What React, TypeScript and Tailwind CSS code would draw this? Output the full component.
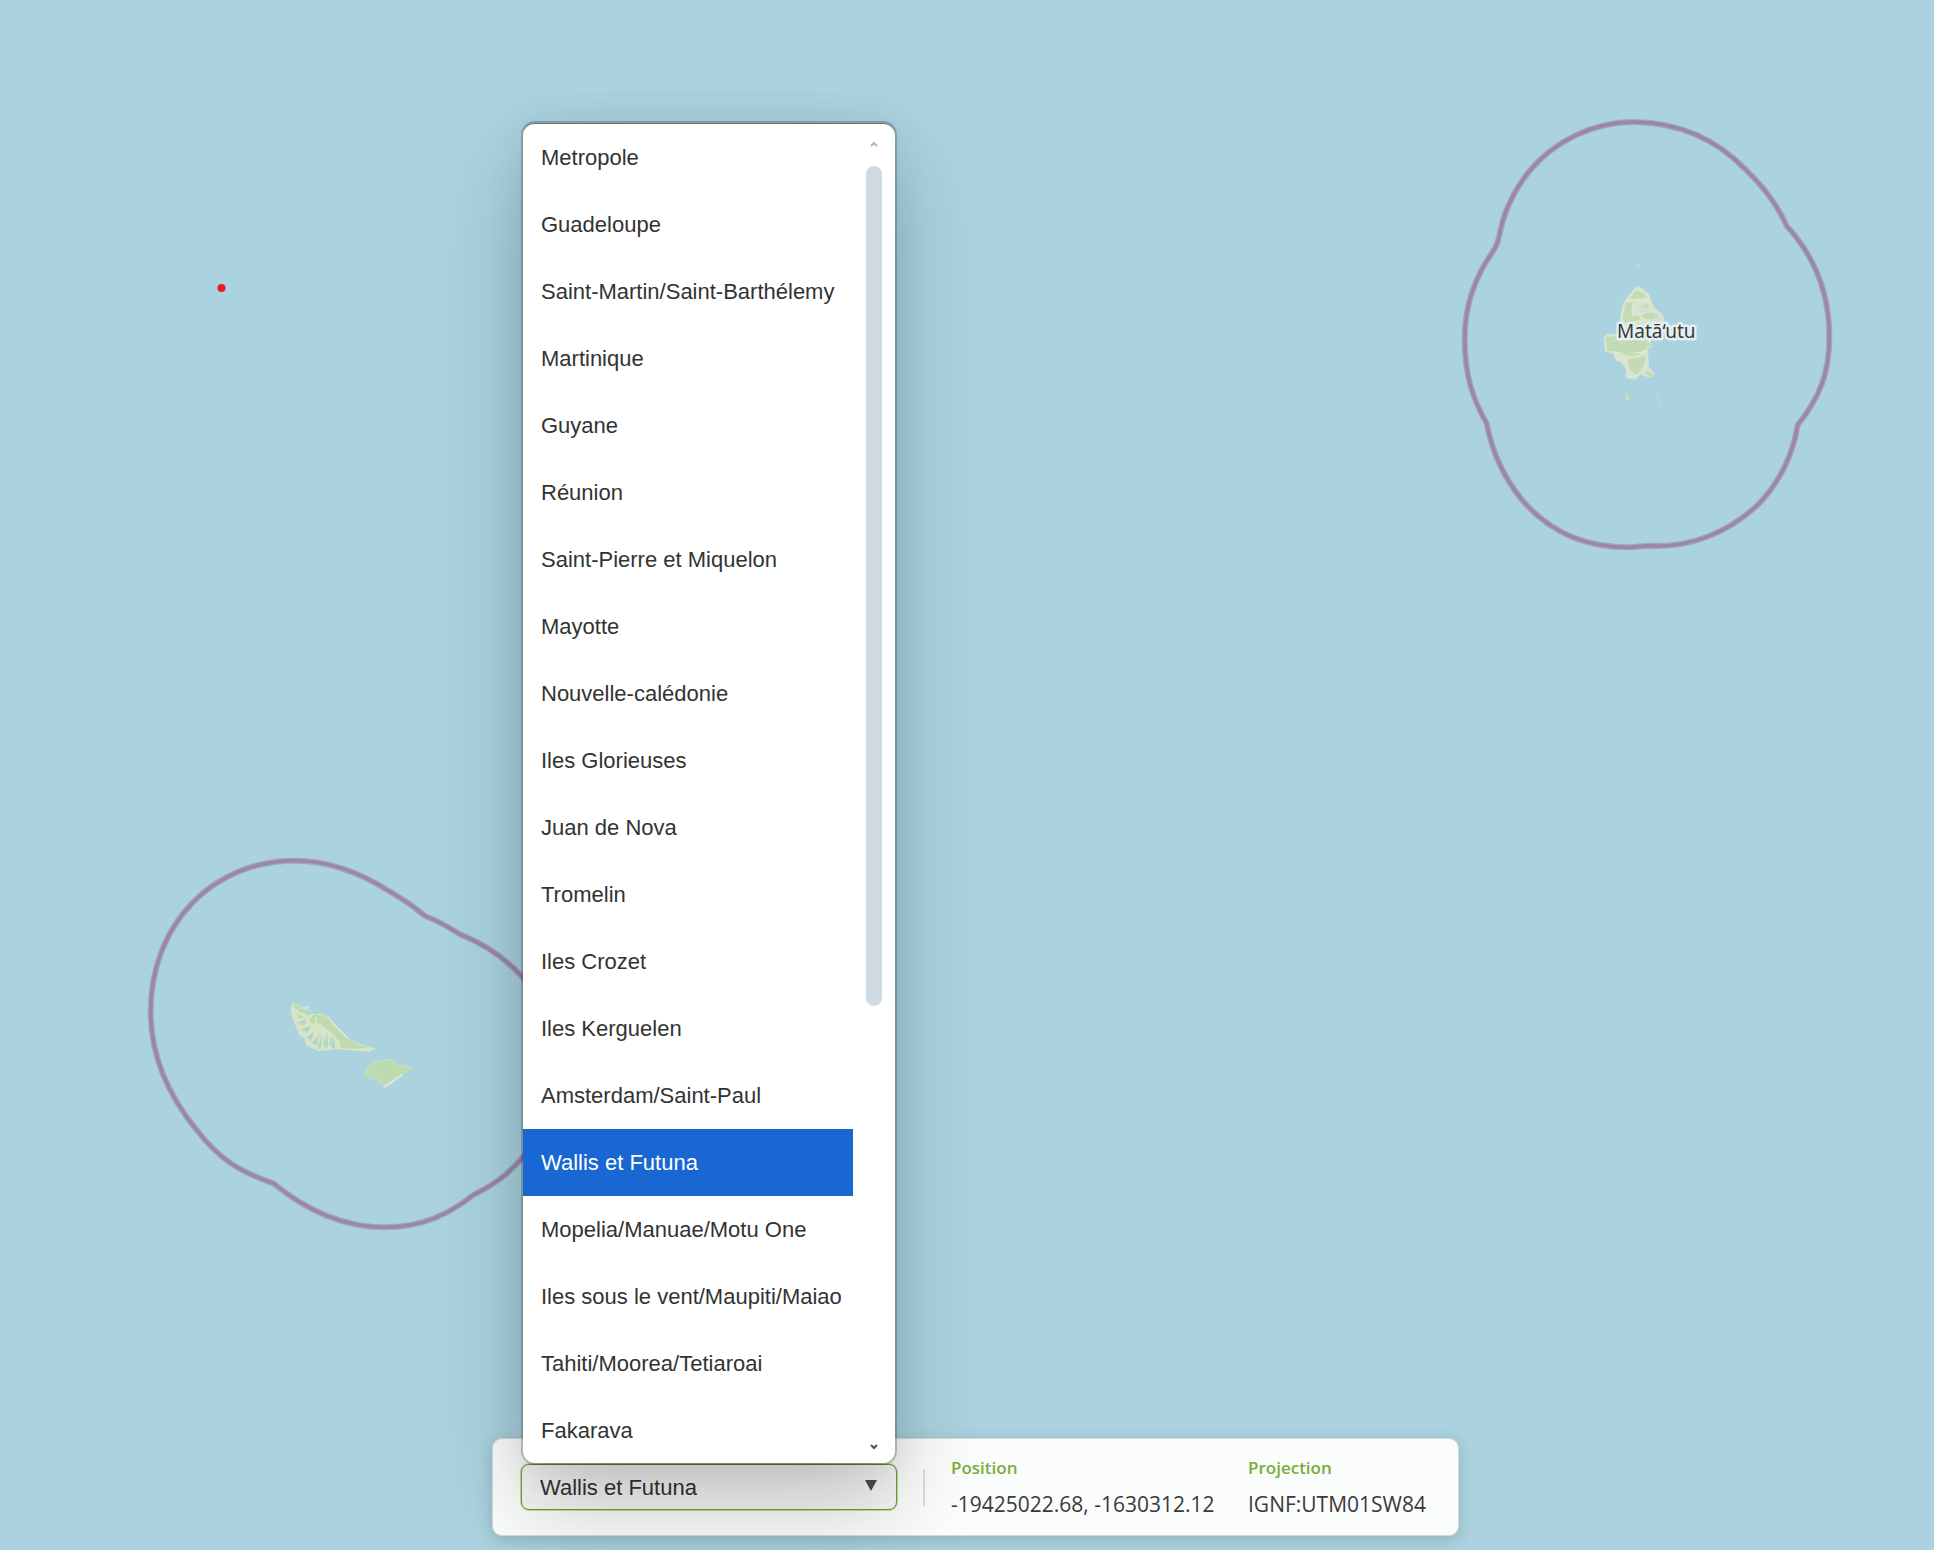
import { useState } from "react";

const TERRITORIES = [
  "Metropole",
  "Guadeloupe",
  "Saint-Martin/Saint-Barthélemy",
  "Martinique",
  "Guyane",
  "Réunion",
  "Saint-Pierre et Miquelon",
  "Mayotte",
  "Nouvelle-calédonie",
  "Iles Glorieuses",
  "Juan de Nova",
  "Tromelin",
  "Iles Crozet",
  "Iles Kerguelen",
  "Amsterdam/Saint-Paul",
  "Wallis et Futuna",
  "Mopelia/Manuae/Motu One",
  "Iles sous le vent/Maupiti/Maiao",
  "Tahiti/Moorea/Tetiaroai",
  "Fakarava",
];

const WALLIS_BORDER =
  "M585 66C460 64 340 125 265 217C220 275 190 335 177 410C174 428 166 444 155 460C100 540 74 620 74 715C74 830 100 900 140 970C155 1050 190 1130 245 1198C330 1300 440 1342 565 1342C590 1342 600 1338 625 1337C745 1345 865 1300 958 1210C1020 1145 1060 1060 1073 975C1140 890 1168 820 1168 710C1168 585 1125 470 1040 378C1010 310 965 255 920 212C825 112 715 68 585 66Z";
const FUTUNA_BORDER =
  "M495 62C250 62 62 250 62 515C62 640 110 760 200 870C270 960 330 995 430 1030C540 1120 650 1162 765 1162C880 1162 960 1120 1030 1065C1110 1025 1140 995 1185 945C1340 760 1320 580 1185 420C1130 355 1070 315 990 283C950 257 925 243 885 228C850 198 820 178 780 155C690 97 590 62 495 62Z";

function MapCanvas() {
  return (
    <svg
      className="absolute inset-0 h-full w-full"
      viewBox="0 0 1934 1550"
      preserveAspectRatio="xMidYMid slice"
      aria-hidden="true"
    >
      <defs>
        <filter id="soften">
          <feGaussianBlur stdDeviation="1.6" />
        </filter>
      </defs>

      <circle cx="221.5" cy="288" r="4" fill="#e91c1c" />

      {/* Maritime limits */}
      <g fill="none" strokeLinejoin="round">
        <g transform="translate(1440 100) scale(0.33333)">
          <path d={WALLIS_BORDER} stroke="#a3a3bd" strokeWidth="18" />
          <path d={WALLIS_BORDER} stroke="#9b86a8" strokeWidth="10" />
        </g>
        <g transform="translate(130 840) scale(0.33333)">
          <path d={FUTUNA_BORDER} stroke="#a3a3bd" strokeWidth="18" />
          <path d={FUTUNA_BORDER} stroke="#9b86a8" strokeWidth="10" />
        </g>
      </g>

      {/* Wallis */}
      <g transform="translate(1590 250) scale(0.33333)" filter="url(#soften)">
        <path d="M136 45l12-2 6 9-7-3z" fill="#cfdfcb" />
        <path
          d="M142 108L160 120L176 132L184 158L196 178L214 190L222 206L220 222L196 238L180 262L184 290L172 296L174 325L176 352L192 370L186 382L166 378L150 372L138 388L108 382L110 358L94 336L78 330L70 310L46 304L42 262L52 254L84 252L90 234L92 196L102 158L120 132Z"
          fill="#dae5cd"
          stroke="#d2e2d6"
          strokeWidth="3"
        />
        <path
          d="M138 122L160 128L170 142L120 148ZM108 158L130 156L122 190L150 200L148 216L110 222L98 206ZM156 196L182 186L208 196L196 204L168 210ZM150 172L172 160L176 174ZM46 262L90 256L120 262L172 268L170 296L150 306L144 316L110 318L92 306L52 302ZM114 328L166 318L162 348L140 374L118 358ZM166 360L190 372L184 380L168 374ZM172 276L184 280L180 292L172 290Z"
          fill="#c1dcb2"
        />
        <path d="M106 150L182 154M128 160L130 200M100 222L176 208M130 310L168 304" stroke="#e1eac9" strokeWidth="4" fill="none" />
        <path d="M148 164L172 178L178 190L150 188ZM182 206L212 200L216 216L190 222Z" fill="#d8dcd4" />
        <path d="M72 280l8-2 2 8-8 2z" fill="#aad3df" />
        <path d="M106 424L120 440L118 451L106 450ZM198 422L206 432L210 462L206 466L204 440Z" fill="#c4dbbd" />
      </g>

      {/* Futuna and Alofi */}
      <g transform="translate(270 980) scale(0.33333)" filter="url(#soften)">
        <path
          d="M68 66L100 82L112 76L124 94L134 104L150 100L176 110L200 140L236 176L268 192L318 206L298 216L236 210L200 208L148 214L124 204L108 194L104 174L88 166L78 140L66 112L62 90Z"
          fill="#d6e4c8"
        />
        <path
          d="M70 70L102 86L120 98L112 108L94 94L72 84ZM128 106L150 104L172 112L192 138L232 176L262 192L296 204L244 206L214 204L196 170L170 146L146 128L130 132L118 120ZM78 100L104 112L90 116ZM84 124L110 128L98 138ZM96 144L122 138L112 160ZM112 172L134 150L124 186ZM132 192L148 156L144 200ZM158 200L168 154L170 198ZM176 194L186 158L186 196Z"
          fill="#bfdbad"
        />
        <path
          d="M112 116L104 128L76 132L98 122ZM124 136L112 152L88 152L110 146ZM130 158L122 176L108 176ZM142 168L136 192L126 190ZM157 152L152 204L144 208ZM173 154L174 202L166 206ZM190 156L196 204L184 206ZM110 84L128 100L116 106L108 96ZM84 86L104 98L88 96Z"
          fill="#aad3df"
        />
        <path d="M136 136L180 158L210 190M140 110L130 150" stroke="#d8e9be" strokeWidth="5" fill="none" />
        <path d="M176 112L200 140L236 176" stroke="#e0e2dc" strokeWidth="4" fill="none" />
        <path
          d="M316 244L368 238L384 256L430 262L392 288L342 322L330 302L282 288L292 262Z"
          fill="#bddab1"
          stroke="#c8dfc4"
          strokeWidth="3"
        />
        <path d="M344 320L398 284" stroke="#e2e4e0" strokeWidth="6" />
      </g>

      <text
        x="1617"
        y="338"
        className="[font-family:'Noto_Sans',sans-serif] text-[19px]"
        fill="#3a3a3a"
        stroke="#e6f0f2"
        strokeWidth="5"
        strokeLinejoin="round"
        paintOrder="stroke"
      >
        Matā‘utu
      </text>
    </svg>
  );
}

function TerritoryMenu({ value, onChange }: { value: string; onChange: (v: string) => void }) {
  return (
    <div className="absolute bottom-full left-[2px] right-[2px] z-10 mb-px flex overflow-hidden rounded-xl border-t border-[#6b7477] bg-white shadow-[0_0_0_2px_rgba(0,0,0,0.2),0_0_40px_rgba(0,0,0,0.07),0_44px_88px_rgba(0,0,0,0.21)]">
      <div role="listbox" aria-label="Territoire" className="max-h-[calc(100vh-211px)] flex-1 overflow-hidden">
        {TERRITORIES.map((name) => (
          <button
            key={name}
            type="button"
            role="option"
            aria-selected={name === value}
            onClick={() => onChange(name)}
            className={
              name === value
                ? "block h-[67px] w-full whitespace-nowrap bg-[#1967d2] pl-[18px] text-left text-white"
                : "block h-[67px] w-full whitespace-nowrap pl-[18px] text-left text-[#333333]"
            }
          >
            {name}
          </button>
        ))}
      </div>
      <div className="flex w-[42px] flex-col items-center justify-between pt-4 pb-3">
        <div className="flex min-h-0 flex-1 flex-col items-center gap-[18px]">
          <svg className="h-2 w-2 shrink-0" viewBox="0 0 8 8" fill="none" aria-hidden="true">
            <path d="M1 6L4 3L7 6" stroke="#b5b5b5" strokeWidth="2" />
          </svg>
          <div className="h-[64.5%] w-4 rounded-full bg-[#d0dae3]" />
        </div>
        <svg className="h-2 w-2 shrink-0" viewBox="0 0 8 8" fill="none" aria-hidden="true">
          <path d="M1 2L4 5L7 2" stroke="#505050" strokeWidth="2" />
        </svg>
      </div>
    </div>
  );
}

export default function App() {
  const [territory, setTerritory] = useState("Wallis et Futuna");

  return (
    <main className="relative flex min-h-screen items-end justify-center overflow-hidden bg-[#aad3df] pb-[14px] pl-[17px] [font-family:'Liberation_Sans',Arial,sans-serif] text-[22px]">
      <MapCanvas />
      <section className="relative flex h-[98px] items-center gap-[26px] rounded-[10px] border border-[#d3dadb] bg-[#fbfdfc] px-7 shadow-[0_4px_16px_rgba(0,0,0,0.16)]">
        <div className="relative w-[376px]">
          <select
            aria-label="Territoire"
            value={territory}
            onChange={(e) => setTerritory(e.target.value)}
            className="block h-[46px] w-full appearance-none rounded-lg border border-[#6f9f2f] bg-[#f8f8f8] pl-[18px] text-[#333333] ring-1 ring-[#76a633]/40 outline-none"
          >
            {TERRITORIES.map((name) => (
              <option key={name}>{name}</option>
            ))}
          </select>
          <svg
            className="pointer-events-none absolute right-5 top-4 h-[11px] w-3"
            viewBox="0 0 12 11"
            aria-hidden="true"
          >
            <path d="M0 0H12L6 11Z" fill="#4d4d4d" />
          </svg>
          <TerritoryMenu value={territory} onChange={setTerritory} />
        </div>
        <div className="h-[37px] w-[2px] bg-[#dcdddd]" />
        <dl className="flex gap-7 pb-[2px] [font-family:'Open_Sans','Noto_Sans',sans-serif] leading-9">
          <div className="min-w-[269px]">
            <dt className="text-[17px] font-semibold text-[#7aad3a]">Position</dt>
            <dd className="text-[21px] text-[#3a3a3a]">-19425022.68, -1630312.12</dd>
          </div>
          <div className="min-w-[182px]">
            <dt className="text-[17px] font-semibold text-[#7aad3a]">Projection</dt>
            <dd className="text-[21px] text-[#3a3a3a]">IGNF:UTM01SW84</dd>
          </div>
        </dl>
      </section>
    </main>
  );
}
